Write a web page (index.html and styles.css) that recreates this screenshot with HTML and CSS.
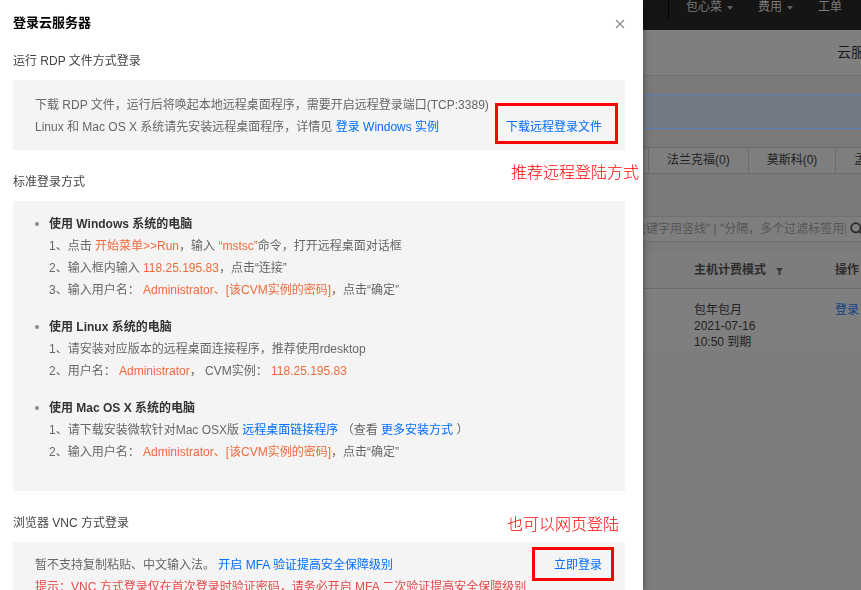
FILE: index.html
```html
<!DOCTYPE html>
<html lang="zh-CN">
<head>
<meta charset="utf-8">
<title>登录云服务器</title>
<link rel="stylesheet" href="styles.css">
</head>
<body>
<div class="console">
  <header class="topbar">
    <nav class="topnav">
      <span class="nav-item">包心菜<i class="caret"></i></span>
      <span class="nav-item">费用<i class="caret"></i></span>
      <span class="nav-item">工单</span>
    </nav>
  </header>
  <div class="page-title">云服务器</div>
  <div class="notice"></div>
  <div class="tabs">
    <span class="tab">法兰克福(0)</span>
    <span class="tab">莫斯科(0)</span>
    <span class="tab">孟买(0)</span>
  </div>
  <div class="search">
    <div class="search-box">
      <span class="placeholder">多个关键字用竖线"&nbsp;|&nbsp;"分隔，多个过滤标签用回车键分隔</span>
      <svg class="search-icon" width="14" height="14" viewBox="0 0 14 14"><circle cx="5.8" cy="5.8" r="4.6" fill="none" stroke="#2a2a2a" stroke-width="1.7"/><path d="M9.2 9.2L13 13" stroke="#2a2a2a" stroke-width="1.8"/></svg>
    </div>
  </div>
  <div class="table">
    <div class="thead">
      <span class="th">主机计费模式<svg class="filter" width="7" height="7" viewBox="0 0 7 7"><path d="M0 0H7L4.5 3.2V7H2.5V3.2Z" fill="#3a3a3a"/></svg></span>
      <span class="th">操作</span>
    </div>
    <div class="trow">
      <span class="td">包年包月<br>2021-07-16<br>10:50 到期</span>
      <a class="td-link">登录</a>
    </div>
  </div>
</div>

<aside class="dialog">
  <div class="dlg-head">
    <h1 class="dlg-title">登录云服务器</h1>
    <svg class="close" width="10" height="10" viewBox="0 0 10 10"><path d="M1 1L9 9M9 1L1 9" stroke="#8c8c8c" stroke-width="1.3"/></svg>
  </div>

  <section class="sec">
    <h2 class="sec-title">运行 RDP 文件方式登录</h2>
    <div class="box box-rdp">
      <div class="lines">
        <div>下载 RDP 文件，运行后将唤起本地远程桌面程序，需要开启远程登录端口(TCP:3389)</div>
        <div>Linux 和 Mac OS X 系统请先安装远程桌面程序，详情见 <a class="link">登录 Windows 实例</a></div>
      </div>
      <a class="mark mark-rdp link">下载远程登录文件</a>
    </div>
  </section>

  <section class="sec">
    <h2 class="sec-title">标准登录方式</h2>
    <ul class="box box-std">
      <li class="os">
        <div class="os-title">使用 Windows 系统的电脑</div>
        <div class="step">1、点击 <span class="hl">开始菜单&gt;&gt;Run</span>，输入 <span class="hl">“mstsc”</span>命令，打开远程桌面对话框</div>
        <div class="step">2、输入框内输入 <span class="hl">118.25.195.83</span>，点击“连接”</div>
        <div class="step">3、输入用户名： <span class="hl">Administrator、[该CVM实例的密码]</span>，点击“确定”</div>
      </li>
      <li class="os">
        <div class="os-title">使用 Linux 系统的电脑</div>
        <div class="step">1、请安装对应版本的远程桌面连接程序，推荐使用rdesktop</div>
        <div class="step">2、用户名： <span class="hl">Administrator</span>， CVM实例： <span class="hl">118.25.195.83</span></div>
      </li>
      <li class="os">
        <div class="os-title">使用 Mac OS X 系统的电脑</div>
        <div class="step">1、请下载安装微软针对Mac OSX版 <a class="link">远程桌面链接程序</a> <span class="paren">（查看 <a class="link">更多安装方式</a> ）</span></div>
        <div class="step">2、输入用户名： <span class="hl">Administrator、[该CVM实例的密码]</span>，点击“确定”</div>
      </li>
    </ul>
  </section>

  <section class="sec">
    <h2 class="sec-title">浏览器 VNC 方式登录</h2>
    <div class="box box-vnc">
      <div class="lines">
        <div>暂不支持复制粘贴、中文输入法。 <a class="link">开启 MFA 验证提高安全保障级别</a></div>
        <div class="warn">提示：VNC 方式登录仅在首次登录时验证密码，请务必开启 MFA 二次验证提高安全保障级别</div>
      </div>
      <a class="mark mark-vnc link">立即登录</a>
    </div>
  </section>

  <p class="note note-rdp">推荐远程登陆方式</p>
  <p class="note note-vnc">也可以网页登陆</p>
</aside>
</body>
</html>
```
FILE: styles.css
```css
* { box-sizing: border-box; }

html, body {
  margin: 0;
  padding: 0;
  height: 100%;
  overflow: hidden;
}

body {
  font-family: "Liberation Sans", "Noto Sans CJK SC", sans-serif;
  font-size: 12px;
  background: #7a7a7a;
}

/* ---------- dimmed console behind the dialog ---------- */
.console {
  min-height: 100vh;
  background: #7a7a7a;
  color: #1e1e1e;
}

.topbar {
  height: 30px;
  background: #151515;
  display: flex;
}

.topnav {
  margin-left: 668px;
  height: 20px;
  border-left: 1px solid #030303;
  padding-left: 17px;
  display: flex;
  gap: 25px;
  line-height: 14px;
  color: #7b7b7b;
  white-space: nowrap;
}

.caret {
  display: inline-block;
  margin-left: 5px;
  vertical-align: middle;
  border-left: 3px solid transparent;
  border-right: 3px solid transparent;
  border-top: 4px solid #5e5e5e;
}

.page-title {
  height: 46px;
  line-height: 44px;
  padding-left: 837px;
  font-size: 14px;
  color: #1c1c1c;
  background: #7f7f7f;
  border-bottom: 1px solid #6f6f6f;
  white-space: nowrap;
}

.notice {
  margin-top: 18px;
  height: 35px;
  background: #737a85;
  border-top: 1px solid #5b7bb3;
  border-bottom: 1px solid #5b7bb3;
}

.tabs {
  margin-top: 18px;
  display: flex;
  padding-left: 648px;
  background: #7e7e7e;
  border-top: 1px solid #6b6b6b;
  border-bottom: 1px solid #6b6b6b;
  white-space: nowrap;
  overflow: hidden;
}

.tab {
  flex: none;
  line-height: 25px;
  padding: 0 18px;
  border-left: 1px solid #6b6b6b;
  color: #1e1e1e;
}

.search {
  margin-top: 42px;
  padding-left: 600px;
}

.search-box {
  height: 26px;
  display: flex;
  align-items: center;
  padding-left: 9px;
  background: #7e7e7e;
  border: 1px solid #707070;
  border-right: none;
}

.placeholder {
  flex: 0 0 236px;
  overflow: hidden;
  white-space: nowrap;
  line-height: 24px;
  color: #555;
}

.search-icon {
  flex: none;
  margin-left: 4px;
}

.table {
  margin-top: 10px;
  background: #7d7d7d;
  min-height: 400px;
}

.thead {
  display: grid;
  grid-template-columns: 141px auto;
  padding-left: 694px;
  height: 37px;
  line-height: 36px;
  border-bottom: 1px solid #6c6c6c;
  font-weight: bold;
  color: #2e2e2e;
  white-space: nowrap;
}

.filter {
  margin-left: 10px;
  vertical-align: -1px;
}

.trow {
  display: grid;
  grid-template-columns: 141px auto;
  padding-left: 694px;
  padding-top: 13px;
  line-height: 16px;
  color: #222;
  background: #7f7f7f;
  white-space: nowrap;
}

.td-link {
  color: #123f87;
}

/* ---------- dialog ---------- */
.dialog {
  position: fixed;
  left: 0;
  top: 0;
  bottom: 0;
  width: 643px;
  background: #fff;
  padding: 13px 18px 0 13px;
  overflow: hidden;
  box-shadow: 1px 0 6px rgba(0, 0, 0, 0.35);
  color: #333;
}

.dlg-head {
  height: 20px;
  display: flex;
  align-items: center;
  justify-content: space-between;
  margin-bottom: 19px;
}

.dlg-title {
  margin: 0;
  font-size: 13px;
  font-weight: bold;
  line-height: 20px;
  color: #000;
}

.close {
  margin-top: 2px;
}

.sec {
  margin-bottom: 23px;
}

.sec-title {
  margin: 0 0 10px;
  font-size: 12px;
  font-weight: normal;
  line-height: 18px;
  color: #444;
}

.box {
  background: #f4f4f4;
  color: #666;
  line-height: 22px;
  margin: 0;
  list-style: none;
}

.link {
  color: #006eff;
  text-decoration: none;
}

.hl {
  color: #f06a3c;
}

.warn {
  color: #e5484a;
}

.lines {
  flex: 1;
  min-width: 0;
  white-space: nowrap;
}

.box-rdp {
  display: flex;
  align-items: flex-end;
  padding: 14px 7px 12px 22px;
}

.mark {
  flex: none;
  border: 3px solid #ff0000;
  line-height: 18px;
  white-space: nowrap;
}

.mark-rdp {
  padding: 12px 13px 5px 8px;
  margin-bottom: -6px;
}

.box-std {
  padding: 12px 0 13px 22px;
}

.os {
  margin-bottom: 15px;
}

.os-title {
  display: flex;
  align-items: center;
  font-weight: bold;
  color: #333;
}

.os-title::before {
  content: "";
  width: 4px;
  height: 4px;
  border-radius: 50%;
  background: #8a8a8a;
  margin-right: 10px;
}

.step {
  padding-left: 14px;
  white-space: nowrap;
}

.box-vnc {
  display: flex;
  align-items: flex-start;
  padding: 12px 11px 12px 22px;
}

.mark-vnc {
  padding: 6px 9px 4px 19px;
  margin-top: -7px;
}

.note {
  position: absolute;
  margin: 0;
  font-family: "Noto Sans CJK SC", sans-serif;
  font-size: 16px;
  font-weight: 300;
  line-height: 20px;
  color: #ff0000;
  white-space: nowrap;
}

.note-rdp {
  left: 511px;
  top: 161px;
}

.note-vnc {
  left: 507px;
  top: 513px;
}
```
